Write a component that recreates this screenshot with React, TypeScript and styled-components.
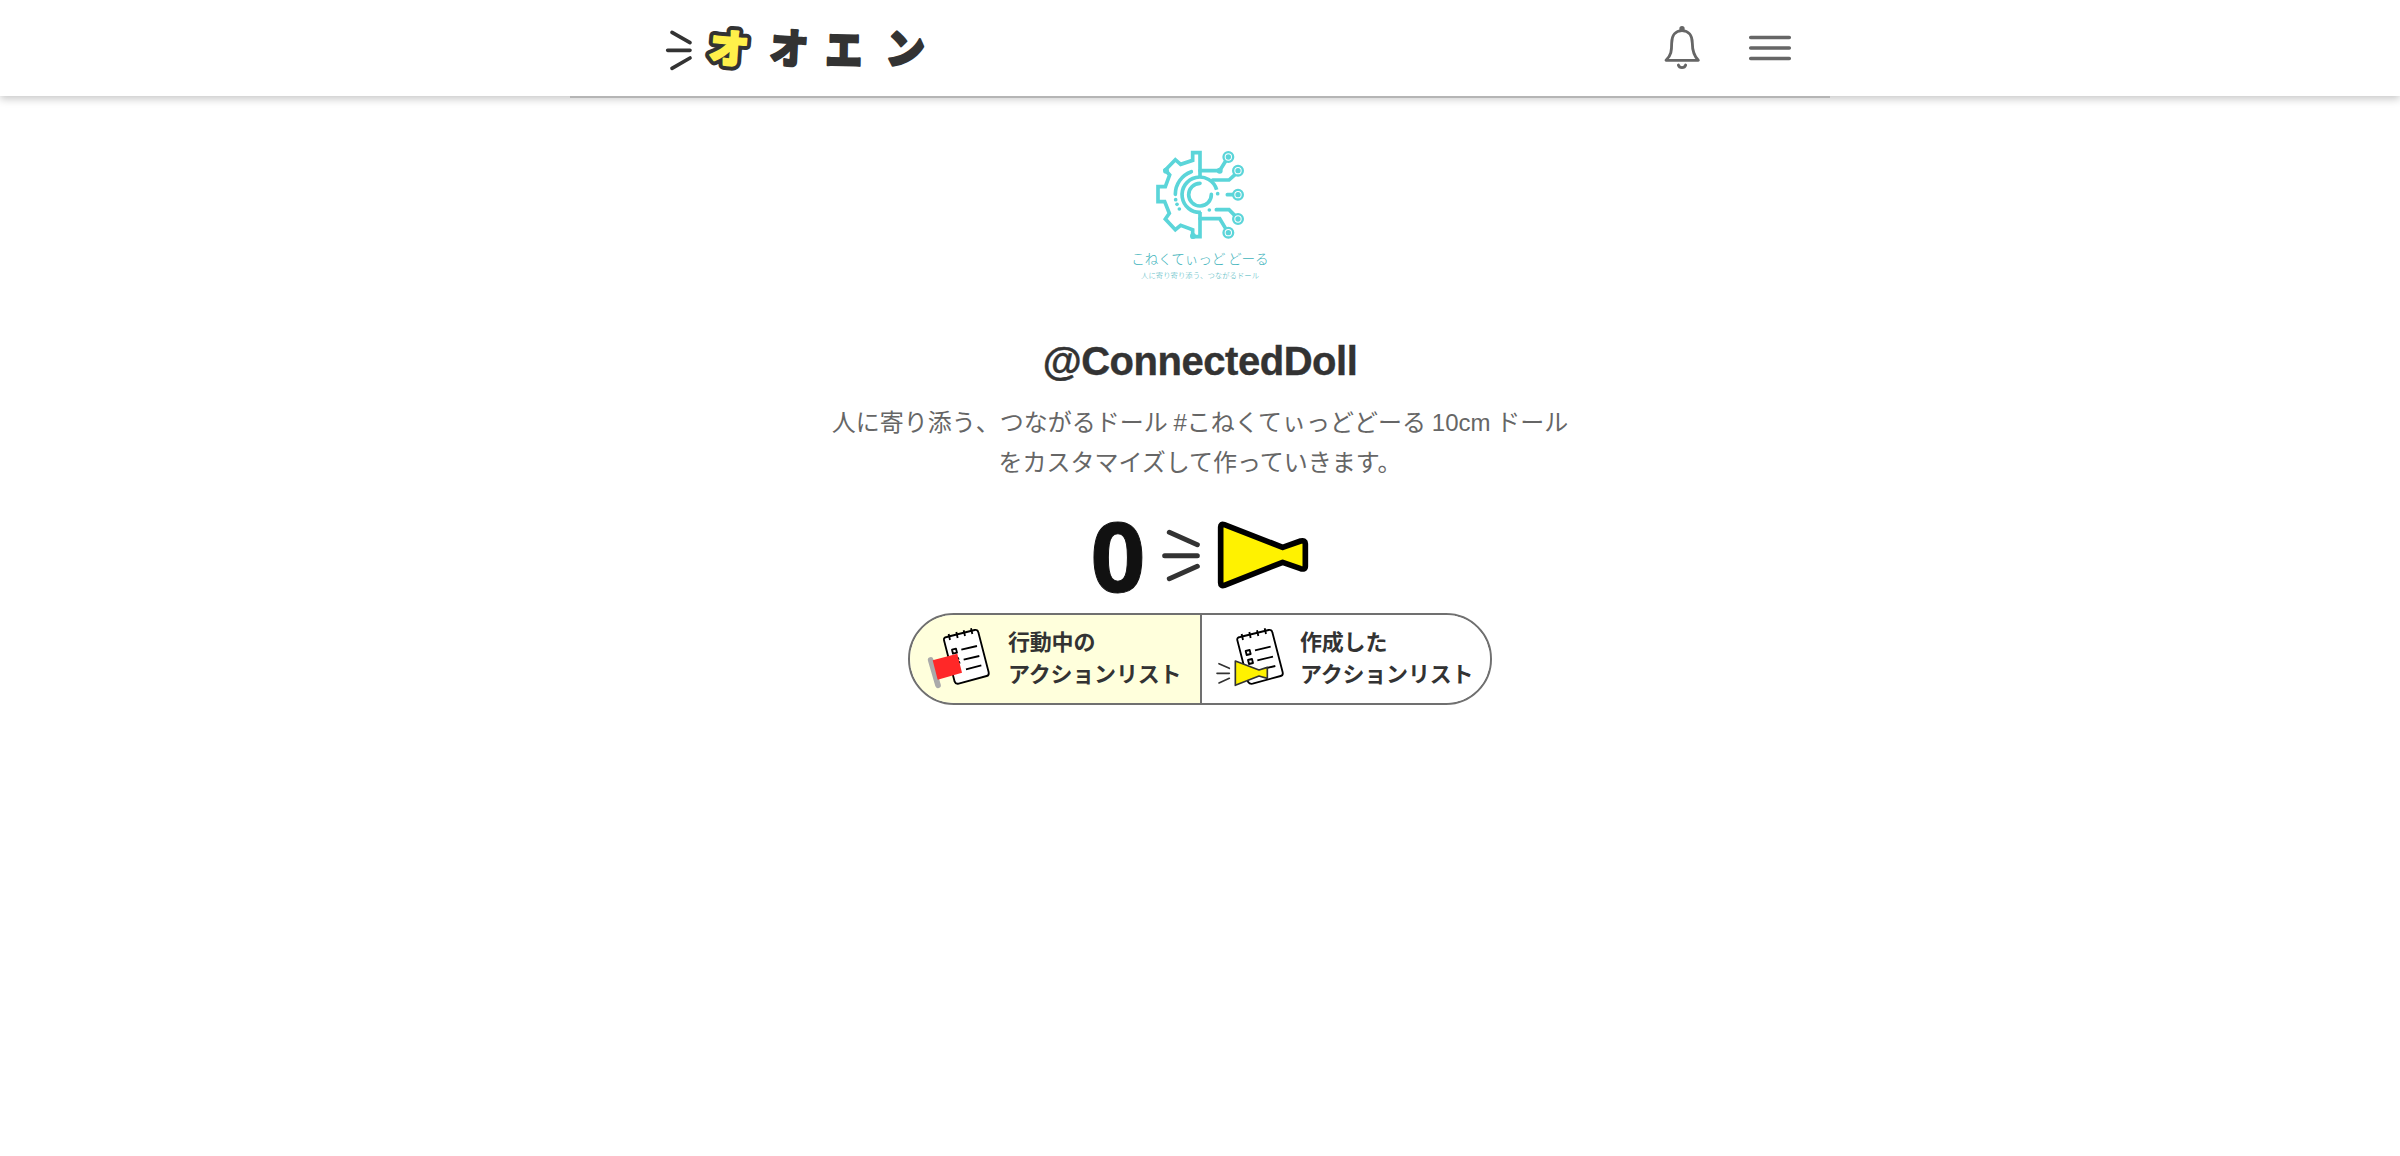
import React from 'react';
import styled, { createGlobalStyle } from 'styled-components';

const GlobalStyle = createGlobalStyle`
  * { box-sizing: border-box; }
  body {
    margin: 0;
    background: #fff;
    color: #333;
    font-family: "Liberation Sans", "Noto Sans CJK JP", sans-serif;
  }
`;

const Header = styled.header`
  height: 96px;
  display: flex;
  justify-content: center;
  align-items: flex-start;
  background: #fff;
  box-shadow: 0 3px 8px rgba(0, 0, 0, 0.22);
`;

const HeaderInner = styled.div`
  width: 1260px;
  height: 98px;
  flex: none;
  padding: 0 35px 0 90px;
  display: flex;
  align-items: center;
  justify-content: space-between;
  border-bottom: 2px solid #b5b5b5;
`;

const HeaderActions = styled.nav`
  display: flex;
  align-items: center;
  gap: 41px;
`;

const IconButton = styled.button`
  display: flex;
  padding: 0;
  border: 0;
  background: none;
`;

const Drawing = styled.svg`
  display: block;
  flex: none;
`;

const LogoGlyph = styled.text`
  font-family: "Noto Sans CJK JP", sans-serif;
  font-weight: 900;
  font-size: 120px;
  text-anchor: middle;
  stroke-linejoin: round;
  paint-order: stroke;
`;

const Main = styled.main`
  display: flex;
  flex-direction: column;
  align-items: center;
  padding-top: 34px;
`;

const AvatarText = styled.text`
  font-family: "Noto Sans CJK JP", sans-serif;
  font-weight: 300;
  text-anchor: middle;
  fill: #3fb4bc;
`;

const UserName = styled.h1`
  margin: 31px 0 0;
  font-size: 40px;
  line-height: 60px;
  font-weight: 700;
  letter-spacing: -0.47px;
  -webkit-text-stroke: 0.4px #333;
`;

const Bio = styled.p`
  width: 750px;
  margin: 12px 0 0;
  font-size: 24px;
  line-height: 40px;
  text-align: center;
  word-spacing: -1px;
  color: #666;
`;

const Score = styled.div`
  height: 116px;
  margin-top: 14px;
  padding-left: 4px;
  display: flex;
  align-items: center;
  gap: 12px;
`;

const ScoreValue = styled.span`
  font-family: "Open Sans", sans-serif;
  font-size: 96px;
  line-height: 96px;
  font-weight: 700;
  color: #111;
  -webkit-text-stroke: 1px #111;
`;

const Switcher = styled.div`
  width: 584px;
  height: 92px;
  display: flex;
  overflow: hidden;
  border: 2px solid #707070;
  border-radius: 46px;
`;

const SwitchTab = styled.button<{ $active?: boolean }>`
  flex: ${(p) => (p.$active ? '0 0 292px' : '1')};
  display: flex;
  align-items: center;
  gap: ${(p) => (p.$active ? 16 : 14)}px;
  padding: 0 0 0 ${(p) => (p.$active ? 14 : 12)}px;
  border: 0;
  border-right: ${(p) => (p.$active ? '2px solid #707070' : '0')};
  background: ${(p) => (p.$active ? '#ffffdc' : '#fff')};
  color: #333;
  text-align: left;
  white-space: nowrap;
`;

const TabLabel = styled.span`
  padding-bottom: 6px;
  font-family: "Noto Sans CJK JP", sans-serif;
  font-size: 22px;
  line-height: 32px;
  font-weight: 700;
  letter-spacing: -0.2px;
`;

const Logo = () => (
  <Drawing width="280" height="80" viewBox="300 24 840 240">
    <path d="M336 97 390 128M323 151H390M336 205 390 174" fill="none" stroke="#333" strokeWidth="11" strokeLinecap="round" />
    <LogoGlyph transform="translate(503 190) rotate(5)" fill="#333" stroke="#333" strokeWidth="30">オ</LogoGlyph>
    <LogoGlyph transform="translate(503 190) rotate(5)" fill="#fff04a" stroke="#fff04a" strokeWidth="6">オ</LogoGlyph>
    <LogoGlyph transform="translate(684 192) scale(.98 1.06) rotate(4)" fill="#333" stroke="#333" strokeWidth="5">オ</LogoGlyph>
    <LogoGlyph transform="translate(851 198) scale(.93 1.08) rotate(1)" fill="#333" stroke="#333" strokeWidth="6">エ</LogoGlyph>
    <LogoGlyph transform="translate(1033 193) scale(.97 1.04) rotate(4)" fill="#333" stroke="#333" strokeWidth="7">ン</LogoGlyph>
  </Drawing>
);

const Bell = () => (
  <Drawing width="44" height="56" viewBox="60 60 132 168" fill="none" stroke="#666" strokeWidth="8.500" strokeLinecap="round" strokeLinejoin="round">
    <circle cx="126" cy="86" r="8" fill="#666" stroke="none" />
    <path d="M78 181C94 166 95 151 95 130 95 106 107 92 126 92s31 14 31 38c0 21 3 36 18 51ZM115 195a11.500 11 0 0 0 22 0" />
  </Drawing>
);

const Menu = () => (
  <Drawing width="50" height="56" viewBox="315 60 150 168">
    <path d="M332 112.500H448M332 144H448M332 175.500H448" stroke="#666" strokeWidth="10.500" strokeLinecap="round" />
  </Drawing>
);

const Avatar = () => (
  <Drawing width="180" height="170" viewBox="0 0 540 510">
    <g fill="none" stroke="#5bd5d9" strokeWidth="11">
      <path d="M270 142V68H248V91L212 103 196 89 166 120 179 135 166 170H144V215H164L178 250 166 267 196 299 212 286 248 299V320H270V246" />
      <path d="M320 179A53 53 0 1 0 273 247" />
      <path d="M270 160A34 34 0 1 0 304 193" strokeLinecap="round" />
      <path d="M196 193A72 72 0 0 1 244 125" strokeLinecap="round" />
      <path d="M270 122H329L347 93M308 150H357L375 134M352 194H369M319 239H357L374 256M270 266H329L347 296" strokeLinecap="round" />
      <g strokeWidth="7">
        {[[355, 81], [384, 122], [384, 194], [384, 267], [355, 308]].map(([x, y]) => (
          <React.Fragment key={y}>
            <circle cx={x} cy={y} r="14.500" fill="#fff" />
            <circle cx={x} cy={y} r="8" fill="#5bd5d9" stroke="none" />
          </React.Fragment>
        ))}
      </g>
    </g>
    <g fill="#5bd5d9">
      <circle cx="168" cy="122" r="9" />
      <circle cx="329" cy="122" r="9" />
      <circle cx="249" cy="318" r="9" />
      <circle cx="197" cy="209" r="5.500" />
      <circle cx="201" cy="223" r="5.500" />
      <circle cx="208" cy="237" r="5.500" />
      <circle cx="323" cy="191" r="5.500" />
      <circle cx="298" cy="240" r="5.500" />
    </g>
    <AvatarText x="270" y="403" fontSize="41" textLength="412">こねくてぃっど どーる</AvatarText>
    <AvatarText x="270" y="445" fontSize="22" textLength="354">人に寄り寄り添う、つながるドール</AvatarText>
  </Drawing>
);

const Megaphone = () => (
  <Drawing width="156" height="72" viewBox="261 60 468 216" strokeLinejoin="round" strokeLinecap="round">
    <path d="M298 100 382 137M284 170H382M298 239 382 202" fill="none" stroke="#333" strokeWidth="15" />
    <path d="M452 84Q452 73 463 77L638 145 692 126Q706 123 706 134V202Q706 213 692 209L638 190 463 259Q452 262 452 251Z" fill="#fff200" stroke="#000" strokeWidth="17" />
  </Drawing>
);

const FlagList = () => (
  <Drawing width="68" height="68" viewBox="102 84 204 204" fill="none" stroke="#000" strokeWidth="5.500" strokeLinecap="butt" strokeLinejoin="round">
    <path d="M170 120 254 99Q263 97 265 106L296 226Q298 235 290 237L206 260Q197 262 194 254L162 130Q160 122 170 120Z" fill="#fff" />
    <path d="M176 111 180 129M199 105 203 123M221 100 225 117M243 94 247 111M214 158 261 147M221 188 268 177M228 217 274 205" />
    <path d="M186 158 198 155 201 167 189 170Z" />
    <path d="M122 189 144 265" stroke="#aaa" strokeWidth="17" strokeLinecap="round" />
    <path d="M128 190 202 170 216 227 143 248Z" fill="#ff2828" stroke="none" />
    <path d="M205 181 211 203" strokeDasharray="7 5" strokeWidth="3" />
  </Drawing>
);

const MegaphoneList = () => (
  <Drawing width="72" height="68" viewBox="72 84 216 204" fill="none" stroke="#000" strokeWidth="5.500" strokeLinejoin="round">
    <path d="M150 120 236 99Q245 97 247 106L278 226Q280 235 272 237L188 260Q179 262 174 254L142 130Q140 122 150 120Z" fill="#fff" />
    <path d="M155 111 159 129M178 105 182 123M201 100 205 117M224 94 228 111M195 160 242 149M202 190 249 179M225 214 256 207" />
    <path d="M167 162 179 159 182 171 170 174ZM174 189 186 186 189 198 177 201Z" />
    <path d="M136 192 207 219 232 211V244L207 237 136 265Z" fill="#fff200" stroke="#333" strokeWidth="5" />
    <path d="M87 200 118 214M81 229H118M87 258 118 244" stroke="#333" strokeWidth="5" strokeLinecap="round" />
  </Drawing>
);

export default function App() {
  return (
    <>
      <GlobalStyle />
      <Header>
        <HeaderInner>
          <Logo />
          <HeaderActions>
            <IconButton aria-label="通知"><Bell /></IconButton>
            <IconButton aria-label="メニュー"><Menu /></IconButton>
          </HeaderActions>
        </HeaderInner>
      </Header>
      <Main>
        <Avatar />
        <UserName>@ConnectedDoll</UserName>
        <Bio>
          人に寄り添う、つながるドール #こねくてぃっどどーる 10cm ドール<br />
          をカスタマイズして作っていきます。
        </Bio>
        <Score>
          <ScoreValue>0</ScoreValue>
          <Megaphone />
        </Score>
        <Switcher>
          <SwitchTab $active>
            <FlagList />
            <TabLabel>行動中の<br />アクションリスト</TabLabel>
          </SwitchTab>
          <SwitchTab>
            <MegaphoneList />
            <TabLabel>作成した<br />アクションリスト</TabLabel>
          </SwitchTab>
        </Switcher>
      </Main>
    </>
  );
}
